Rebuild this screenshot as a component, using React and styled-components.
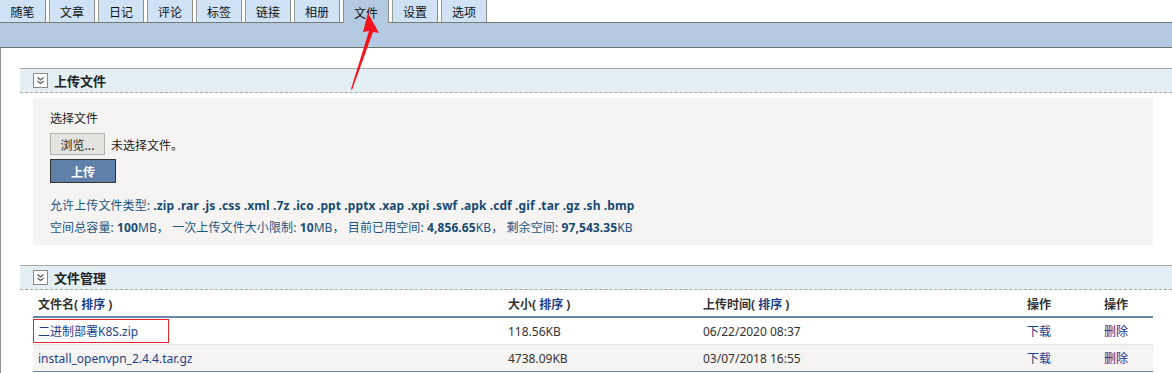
import React from "react";
import styled, { createGlobalStyle } from "styled-components";

const tabs = ["随笔", "文章", "日记", "评论", "标签", "链接", "相册", "文件", "设置", "选项"];

const files = [
  { name: "二进制部署K8S.zip", size: "118.56KB", time: "06/22/2020 08:37", marked: true },
  { name: "install_openvpn_2.4.4.tar.gz", size: "4738.09KB", time: "03/07/2018 16:55" },
];

const CollapseIcon = () => (
  <IconBox>
    <svg width="9" height="9" viewBox="0 0 9 9">
      <path d="M1.5 1.5 L4.5 4 L7.5 1.5 M1.5 5 L4.5 7.5 L7.5 5" fill="none" stroke="#555" strokeWidth="1.1" />
    </svg>
  </IconBox>
);

const App = () => {
  return (
    <>
      <GlobalStyle />
      <Page>
        <TabRow>
          {tabs.map((t) => (
            <Tab key={t} $active={t === "文件"}>
              {t}
            </Tab>
          ))}
        </TabRow>
        <Bar />
        <Content>
          <SectionHeader>
            <CollapseIcon />
            <SectionTitle>上传文件</SectionTitle>
          </SectionHeader>
          <UploadBody>
            <Label>选择文件</Label>
            <FileRow>
              <BrowseButton>浏览...</BrowseButton>
              <span>未选择文件。</span>
            </FileRow>
            <UploadButton>上传</UploadButton>
            <InfoLine $first>
              允许上传文件类型: <b>.zip .rar .js .css .xml .7z .ico .ppt .pptx .xap .xpi .swf .apk .cdf .gif .tar .gz .sh .bmp</b>
            </InfoLine>
            <InfoLine>
              空间总容量: <b>100</b>MB， 一次上传文件大小限制: <b>10</b>MB， 目前已用空间: <b>4,856.65</b>KB， 剩余空间:{" "}
              <b>97,543.35</b>KB
            </InfoLine>
          </UploadBody>

          <SectionHeader $gap={20}>
            <CollapseIcon />
            <SectionTitle>文件管理</SectionTitle>
          </SectionHeader>
          <Table>
            <HeadRow>
              <Cell>
                文件名( <SortLink>排序</SortLink> )
              </Cell>
              <Cell>
                大小( <SortLink>排序</SortLink> )
              </Cell>
              <Cell>
                上传时间( <SortLink>排序</SortLink> )
              </Cell>
              <Cell>操作</Cell>
              <Cell>操作</Cell>
            </HeadRow>
            {files.map((f, i) => (
              <Row key={f.name} $alt={i % 2 === 1} $last={i === files.length - 1}>
                <Cell>
                  <FileLink>{f.name}</FileLink>
                  {f.marked && <MarkBox />}
                </Cell>
                <Cell>{f.size}</Cell>
                <Cell>{f.time}</Cell>
                <Cell>
                  <ActionLink>下载</ActionLink>
                </Cell>
                <Cell>
                  <ActionLink $dark>删除</ActionLink>
                </Cell>
              </Row>
            ))}
          </Table>
        </Content>

        <Arrow width="30" height="80" viewBox="0 0 30 80">
          <polygon points="18,0 29,20 23,19 2,77 1,76 19,18 13,19" fill="#f2141c" />
        </Arrow>
      </Page>
    </>
  );
};

const GlobalStyle = createGlobalStyle`
  body {
    margin: 0;
    background: #fff;
    font-family: "Noto Sans", "Noto Sans CJK SC", sans-serif;
    font-size: 12px;
    color: #333;
  }
`;

const Page = styled.div`
  position: relative;
  width: 1172px;
  height: 373px;
  overflow: hidden;
`;

const TabRow = styled.div`
  display: flex;
  gap: 3px;
  height: 22px;
  position: relative;
  z-index: 1;
`;

const Tab = styled.div`
  width: 46px;
  height: ${(p) => (p.$active ? "23px" : "22px")};
  box-sizing: border-box;
  display: flex;
  align-items: center;
  justify-content: center;
  font-family: "Noto Sans CJK SC", sans-serif;
  font-size: 12px;
  color: #111;
  background: ${(p) => (p.$active ? "#b4c9e2" : "#cfe2f6")};
  border-left: 1px solid ${(p) => (p.$active ? "#8c8f88" : "#9a9c96")};
  border-right: 1px solid #8c8f88;
  padding-top: 1px;
  &:first-child {
    border-left: none;
  }
`;

const Bar = styled.div`
  height: 24px;
  background: #b4c9e2;
  border-top: 1px solid #767a70;
  border-bottom: 1px solid #6f736d;
`;

const Content = styled.div`
  border-left: 1px solid #8f8f8f;
  padding: 20px 0 0 19px;
  height: 400px;
`;

const SectionHeader = styled.div`
  display: flex;
  align-items: center;
  height: 23px;
  margin-top: ${(p) => p.$gap || 0}px;
  padding-left: 13px;
  background: #e3eef5;
  border-top: 1px solid #a9a9a4;
  border-bottom: 1px dashed #a9a9a4;
`;

const IconBox = styled.span`
  width: 13px;
  height: 13px;
  border: 1px solid #8a8a8a;
  background: #fff;
  display: flex;
  align-items: center;
  justify-content: center;
`;

const SectionTitle = styled.span`
  margin-left: 6px;
  font-family: "Noto Sans CJK SC", sans-serif;
  font-size: 13px;
  font-weight: bold;
  color: #222;
`;

const UploadBody = styled.div`
  margin: 5px 19px 0 13px;
  background: #f5f4f2;
  padding: 12px 17px 8px;
  height: 127px;
`;

const Label = styled.div`
  font-family: "Noto Sans CJK SC", sans-serif;
  color: #222;
  line-height: 16px;
`;

const FileRow = styled.div`
  display: flex;
  align-items: center;
  gap: 6px;
  margin-top: 7px;
  color: #222;
  font-family: "Noto Sans CJK SC", sans-serif;
`;

const BrowseButton = styled.button`
  width: 55px;
  height: 22px;
  font-family: "Noto Sans CJK SC", sans-serif;
  font-size: 12px;
  color: #222;
  background: #e4e3e0;
  border: 1px solid #b3b3b0;
  padding: 0;
`;

const UploadButton = styled.button`
  display: block;
  margin-top: 4px;
  width: 66px;
  height: 24px;
  background: #5f80a8;
  border: 1px solid #333;
  color: #fff;
  font-family: "Noto Sans CJK SC", sans-serif;
  font-size: 12px;
  font-weight: bold;
  padding: 0;
`;

const InfoLine = styled.div`
  color: #1d5583;
  line-height: 22px;
  white-space: nowrap;
  letter-spacing: 0.1px;
  margin-top: ${(p) => (p.$first ? "12px" : "0")};
  b {
    color: #164a74;
  }
`;

const Table = styled.div`
  margin: 2px 19px 0 13px;
`;

const HeadRow = styled.div`
  display: grid;
  grid-template-columns: 470px 195px 324px 77px 54px;
  height: 24px;
  align-items: center;
  font-weight: bold;
  color: #333;
  border-bottom: 2px solid #6c86a8;
`;

const Row = styled.div`
  display: grid;
  grid-template-columns: 470px 195px 324px 77px 54px;
  height: 26px;
  align-items: center;
  background: ${(p) => (p.$alt ? "#f5f4f2" : "#fff")};
  border-bottom: 1px solid ${(p) => (p.$last ? "#6c86a8" : "#e2e2de")};
`;

const Cell = styled.div`
  position: relative;
  padding-left: 5px;
  white-space: nowrap;
`;

const SortLink = styled.span`
  color: #1c3f8a;
`;

const FileLink = styled.span`
  color: #1c3f8a;
`;

const MarkBox = styled.span`
  position: absolute;
  left: 0;
  top: calc(50% - 12px);
  width: 134px;
  height: 22px;
  border: 1px solid #e8262b;
`;

const ActionLink = styled.span`
  font-family: "Noto Sans CJK SC", sans-serif;
  color: ${(p) => (p.$dark ? "#2a2a8a" : "#1c3f8a")};
`;

const Arrow = styled.svg`
  position: absolute;
  left: 350px;
  top: 13px;
  pointer-events: none;
  z-index: 5;
`;

export default App;
